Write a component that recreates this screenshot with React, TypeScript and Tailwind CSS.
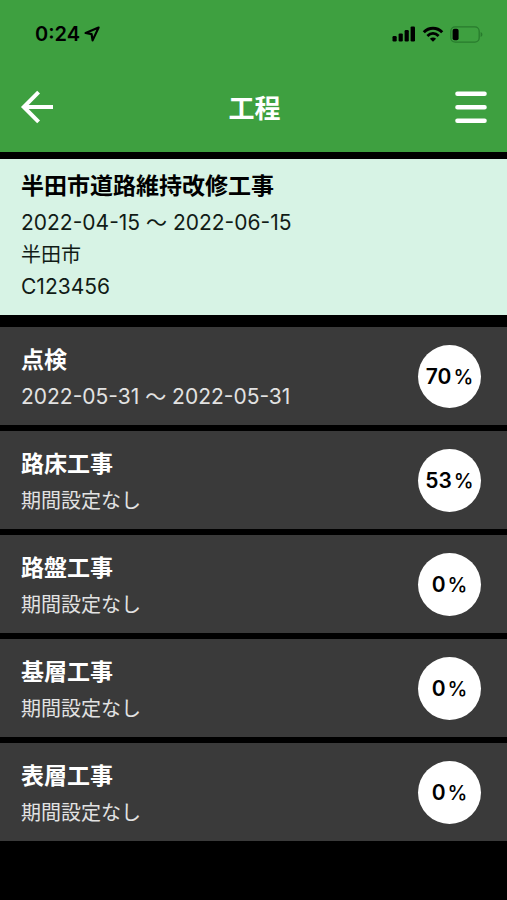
interface Process {
    name: string;
    from?: string;
    to?: string;
    progress: number;
}

const processes: Process[] = [
    { name: '点検', from: '2022-05-31', to: '2022-05-31', progress: 70 },
    { name: '路床工事', progress: 53 },
    { name: '路盤工事', progress: 0 },
    { name: '基層工事', progress: 0 },
    { name: '表層工事', progress: 0 },
];

const LocationIcon = () => (
    <svg width="17" height="17" viewBox="0 0 17 17" fill="none" stroke="currentColor" strokeWidth="2.2" strokeLinejoin="round" aria-hidden="true">
        <path d="M14.6 1.6 L1.6 7 L7.6 8.2 L8.6 14.4 Z" />
    </svg>
);

const SignalIcon = () => (
    <svg width="24" height="16" viewBox="0 0 24 16" fill="currentColor" aria-hidden="true">
        <rect x="0.5" y="10" width="4.2" height="5.5" rx="1.2" />
        <rect x="6.6" y="7.4" width="4.2" height="8.1" rx="1.2" />
        <rect x="12.6" y="4" width="4.2" height="11.5" rx="1.2" />
        <rect x="18.6" y="0.4" width="4.4" height="15.1" rx="1.2" />
    </svg>
);

const WifiIcon = () => (
    <svg width="22" height="16" viewBox="0 0 22 16" aria-hidden="true">
        <path d="M1.8 6.2 C7 0.9 15 0.9 20.2 6.2" fill="none" stroke="currentColor" strokeWidth="3" />
        <path d="M5.4 9.9 C8.7 6.7 13.3 6.7 16.6 9.9" fill="none" stroke="currentColor" strokeWidth="2.8" />
        <path d="M11 15.8 L7.9 12.8 C9.7 11.2 12.3 11.2 14.1 12.8 Z" fill="currentColor" />
    </svg>
);

const BatteryIcon = () => (
    <svg width="33" height="17" viewBox="0 0 33 17" aria-hidden="true">
        <rect x="0.8" y="0.8" width="28.4" height="15.4" rx="4.4" fill="none" stroke="#287b2d" strokeWidth="1.3" />
        <path d="M30.6 6 C33 7 33 10 30.6 11 Z" fill="#287b2d" />
        <rect x="2.6" y="2.8" width="6" height="11.4" rx="2" fill="#000" />
    </svg>
);

const BackIcon = () => (
    <svg width="34" height="34" viewBox="0 0 34 34" fill="none" stroke="currentColor" strokeWidth="4" aria-hidden="true">
        <path d="M33 17 H4" />
        <path d="M18.6 2.2 L3.8 17 L18.6 31.8" />
    </svg>
);

const MenuIcon = () => (
    <svg width="32" height="34" viewBox="0 0 32 34" stroke="currentColor" strokeWidth="4.4" strokeLinecap="round" aria-hidden="true">
        <path d="M2.4 3.8 H29.6 M2.4 17.3 H29.6 M2.4 30.8 H29.6" />
    </svg>
);

const Period = ({ from, to }: { from: string; to: string }) => (
    <p className="text-[21px] leading-8">
        {from} 〜 {to}
    </p>
);

const ProcessRow = ({ name, from, to, progress }: Process) => (
    <li className="flex items-center justify-between bg-[#3a3a3a] py-3 pr-[26px] pl-[21px]">
        <div className="flex flex-col gap-1 pt-1">
            <h3 className="text-[23px] leading-[34px] font-bold text-white">{name}</h3>
            <div className="text-[#e2e2e2]">
                {from && to ? (
                    <Period from={from} to={to} />
                ) : (
                    <p className="text-xl leading-8">期間設定なし</p>
                )}
            </div>
        </div>
        <div className="flex size-[63px] items-center justify-center gap-[2px] rounded-full bg-white pt-[2px] text-[21px] leading-8 font-semibold text-black">
            <span>{progress}</span>
            <span className="text-xl leading-8 font-medium">%</span>
        </div>
    </li>
);

const App = () => {
    return (
        <div className="min-h-screen bg-black font-['Inter','Noto_Sans_CJK_JP',sans-serif]" lang="ja">
            <header className="bg-[#3ea040] pt-5 pb-[23px]">
                <div className="flex items-center justify-between pr-6 pl-[35px] text-black">
                    <div className="flex items-center gap-1 text-xl leading-7 font-semibold">
                        <span>0:24</span>
                        <LocationIcon />
                    </div>
                    <div className="flex items-center gap-[6px]">
                        <SignalIcon />
                        <WifiIcon />
                        <BatteryIcon />
                    </div>
                </div>
                <div className="mt-[37px] flex items-center justify-between px-5 text-white">
                    <button type="button" aria-label="戻る">
                        <BackIcon />
                    </button>
                    <h1 className="pt-1 text-[26px] leading-10 font-bold">工程</h1>
                    <button type="button" aria-label="メニュー">
                        <MenuIcon />
                    </button>
                </div>
            </header>
            <main>
                <section className="mt-[7px] bg-[#d7f3e5] px-[21px] pt-[10px] pb-3 text-[#111b16]">
                    <h2 className="mb-1 text-[23px] leading-[34px] font-bold text-black">半田市道路維持改修工事</h2>
                    <Period from="2022-04-15" to="2022-06-15" />
                    <p className="text-xl leading-8">半田市</p>
                    <p className="text-[21px] leading-8">C123456</p>
                </section>
                <ul className="mt-3 flex flex-col gap-[6px]">
                    {processes.map((process) => (
                        <ProcessRow key={process.name} {...process} />
                    ))}
                </ul>
            </main>
        </div>
    );
};

export default App;
